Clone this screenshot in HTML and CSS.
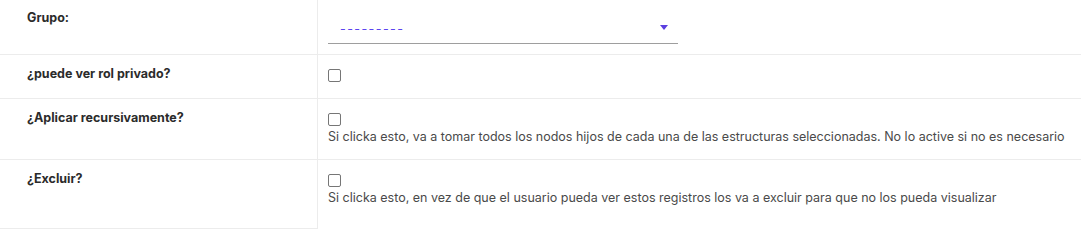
FILE: index.html
```html
<!DOCTYPE html>
<html lang="es">
<head>
<meta charset="utf-8">
<title>Formulario</title>
<link rel="stylesheet" href="styles.css">
</head>
<body>
<div class="form">
  <div class="row row-select">
    <div class="label">Grupo:</div>
    <div class="field">
      <div class="select">
        <span class="placeholder">---------</span>
        <span class="caret"></span>
      </div>
    </div>
  </div>
  <div class="row">
    <div class="label">¿puede ver rol privado?</div>
    <div class="field"><span class="checkbox"></span></div>
  </div>
  <div class="row">
    <div class="label">¿Aplicar recursivamente?</div>
    <div class="field">
      <span class="checkbox"></span>
      <p class="help">Si clicka esto, va a tomar todos los nodos hijos de cada una de las estructuras seleccionadas. No lo active si no es necesario</p>
    </div>
  </div>
  <div class="row row-last">
    <div class="label">¿Excluir?</div>
    <div class="field">
      <span class="checkbox"></span>
      <p class="help">Si clicka esto, en vez de que el usuario pueda ver estos registros los va a excluir para que no los pueda visualizar</p>
    </div>
  </div>
</div>
</body>
</html>
```
FILE: styles.css
```css
html, body {
  margin: 0;
  padding: 0;
  background: #ffffff;
}
body {
  font-family: Inter, "Noto Sans", sans-serif;
  font-size: 12.5px;
  color: #333333;
}
.form {
  display: flex;
  flex-direction: column;
}
.row {
  display: grid;
  grid-template-columns: 318px 1fr;
  border-top: 1px solid #ececec;
}
.row:first-child {
  border-top: none;
}
.label {
  border-right: 1px solid #ececec;
  padding: 10px 10px 12px 27px;
  font-weight: 700;
  font-size: 12.5px;
  line-height: 18px;
  color: #2b2b2b;
}
.row-last .label {
  border-bottom: 1px solid #ececec;
}
.row-select .label {
  padding-top: 9px;
}
.field {
  padding: 14px 10px 13px 10px;
}
.row-last .field {
  padding-bottom: 22px;
}
.row-select .field {
  padding: 16px 10px 10px 10px;
}
.select {
  width: 350px;
  height: 28px;
  box-sizing: border-box;
  border-bottom: 1px solid #9e9e9e;
  display: flex;
  align-items: center;
  justify-content: space-between;
  padding: 0 10px 2px 12px;
}
.placeholder {
  color: #5b44f0;
  font-size: 12.5px;
  letter-spacing: 1.4px;
}
.caret {
  width: 0;
  height: 0;
  border-left: 4.5px solid transparent;
  border-right: 4.5px solid transparent;
  border-top: 5px solid #5b3fe0;
  margin-bottom: 2px;
}
.checkbox {
  display: block;
  width: 13px;
  height: 13px;
  box-sizing: border-box;
  border: 1px solid #767676;
  border-radius: 2px;
  background: #fff;
}
.row-select + .row .field {
  padding-bottom: 16px;
}
.help {
  margin: 2px 0 0 0;
  font-size: 12.5px;
  line-height: 18px;
  color: #4a4a4a;
}
```
